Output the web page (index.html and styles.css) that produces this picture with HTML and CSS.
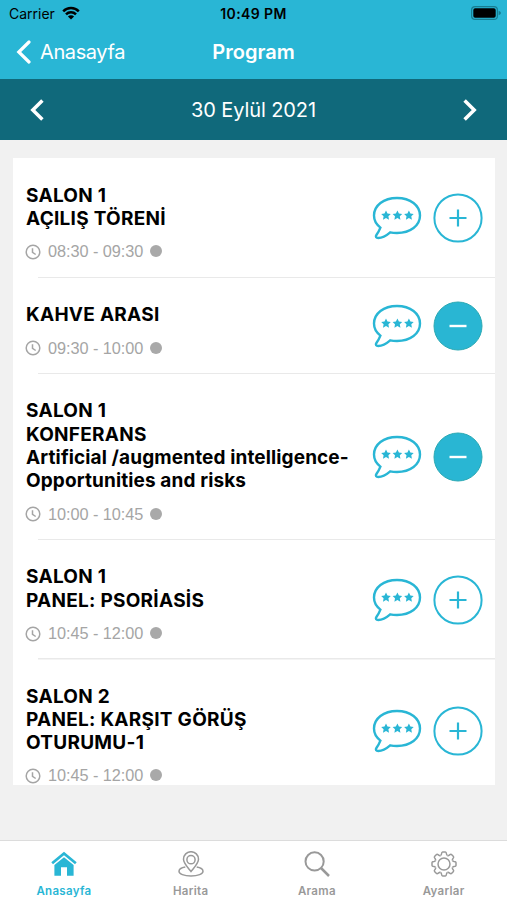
FILE: index.html
```html
<!DOCTYPE html>
<html lang="tr">
<head>
<meta charset="utf-8">
<title>Program</title>
<link rel="stylesheet" href="styles.css">
</head>
<body>
<svg class="defs" aria-hidden="true">
  <symbol id="bubble" viewBox="0 0 50 44">
    <path d="M25 2C38.500 2 48 9.600 48 19.600C48 29.600 38.500 37 25 37C22.500 37 20.300 36.800 18.200 36.300C14.500 39.500 10 42 6.300 42C4 42 3.300 40.600 4.400 39C6.300 36.300 7.500 34 8.400 31.600C4 28.300 2 24.300 2 19.600C2 9.600 11.500 2 25 2Z" fill="none" stroke="currentColor" stroke-width="2.400"/>
    <g fill="currentColor">
      <path id="star" d="M14 14.500L15.500 17.400L18.800 17.900L16.400 20.300L17 23.700L14 22.100L11 23.700L11.600 20.300L9.200 17.900L12.500 17.400Z"/>
      <use href="#star" x="11.400"/>
      <use href="#star" x="22.900"/>
    </g>
  </symbol>
  <symbol id="clock" viewBox="0 0 16 16">
    <circle cx="8" cy="8" r="6.800"/>
    <path d="M7.500 4.300V8.300L10.700 10.500"/>
  </symbol>
  <symbol id="plus" viewBox="0 0 50 50">
    <circle cx="25" cy="25" r="23.600" fill="none" stroke="currentColor" stroke-width="2"/>
    <path d="M16.500 25H33.500M25 16.500V33.500" stroke="currentColor" stroke-width="2.200"/>
  </symbol>
  <symbol id="minus" viewBox="0 0 50 50">
    <circle cx="25" cy="25" r="24" fill="#29b6d3" stroke="#2aa9b4" stroke-width="1"/>
    <path d="M16.500 25H33.500" stroke="#fff" stroke-width="2.400"/>
  </symbol>
</svg>

<header>
  <div class="status">
    <span class="carrier">Carrier</span>
    <svg class="wifi" viewBox="0 0 18 14"><path d="M1.200 5.300A11 11 0 0 1 16.800 5.300M4 8.300A7 7 0 0 1 14 8.300" fill="none" stroke="#000" stroke-width="2.500"/><path d="M9 13.600L5.900 10.500A4.400 4.400 0 0 1 12.100 10.500Z"/></svg>
    <span class="clock-text">10:49 PM</span>
    <svg class="battery" viewBox="0 0 30 14"><rect x=".6" y=".6" width="25.800" height="12.800" rx="3.500" fill="none" stroke="#177d91" stroke-width="1.200"/><rect x="2.300" y="2.300" width="22.400" height="9.400" rx="1.800"/><path d="M27.600 4.800Q30 5.500 30 7Q30 8.500 27.600 9.200Z" fill="#177d91"/></svg>
  </div>
  <nav class="bar">
    <svg class="back-icon" viewBox="0 0 16 24"><path d="M13 2L2.800 12L13 22" fill="none" stroke="#fff" stroke-width="3.200" stroke-linecap="round"/></svg>
    <span class="back">Anasayfa</span>
    <h1>Program</h1>
  </nav>
</header>

<div class="date">
  <svg viewBox="0 0 14 22"><path d="M12.400 1.500L2.800 11L12.400 20.500" fill="none" stroke="#fff" stroke-width="3.500"/></svg>
  <span>30 Eylül 2021</span>
  <svg viewBox="0 0 14 22"><path d="M1.600 1.500L11.200 11L1.600 20.500" fill="none" stroke="#fff" stroke-width="3.500"/></svg>
</div>

<main>
  <ul class="sessions">
    <li>
      <div class="info"><h2>SALON 1<br>AÇILIŞ TÖRENİ</h2>
        <p><svg class="time-icon"><use href="#clock"/></svg><time>08:30 - 09:30</time><i class="dot"></i></p></div>
      <svg class="bubble"><use href="#bubble"/></svg><svg class="toggle"><use href="#plus"/></svg>
    </li>
    <li>
      <div class="info"><h2>KAHVE ARASI</h2>
        <p><svg class="time-icon"><use href="#clock"/></svg><time>09:30 - 10:00</time><i class="dot"></i></p></div>
      <svg class="bubble"><use href="#bubble"/></svg><svg class="toggle"><use href="#minus"/></svg>
    </li>
    <li>
      <div class="info"><h2>SALON 1<br>KONFERANS<br><span class="latin">Artificial /augmented intelligence-<br>Opportunities and risks</span></h2>
        <p><svg class="time-icon"><use href="#clock"/></svg><time>10:00 - 10:45</time><i class="dot"></i></p></div>
      <svg class="bubble"><use href="#bubble"/></svg><svg class="toggle"><use href="#minus"/></svg>
    </li>
    <li>
      <div class="info"><h2>SALON 1<br>PANEL: PSORİASİS</h2>
        <p><svg class="time-icon"><use href="#clock"/></svg><time>10:45 - 12:00</time><i class="dot"></i></p></div>
      <svg class="bubble"><use href="#bubble"/></svg><svg class="toggle"><use href="#plus"/></svg>
    </li>
    <li>
      <div class="info"><h2>SALON 2<br>PANEL: KARŞIT GÖRÜŞ<br>OTURUMU-1</h2>
        <p><svg class="time-icon"><use href="#clock"/></svg><time>10:45 - 12:00</time><i class="dot"></i></p></div>
      <svg class="bubble"><use href="#bubble"/></svg><svg class="toggle"><use href="#plus"/></svg>
    </li>
  </ul>
</main>

<footer>
  <a class="tab active"><svg viewBox="0 0 26 26" fill="currentColor"><path d="M13 .8L.3 11.200L2 13.200L13 4.300L24 13.200L25.700 11.200Z"/><path d="M13 6.300L3.400 14V24.700H10V16.200H16V24.700H22.600V14Z"/></svg><span>Anasayfa</span></a>
  <a class="tab"><svg viewBox="0 0 26 26" fill="none" stroke="currentColor" stroke-width="1.500"><path d="M13 20.500C9 15.500 5.500 12 5.500 8.200A7.500 7.500 0 0 1 20.500 8.200C20.500 12 17 15.500 13 20.500Z"/><circle cx="13" cy="8.700" r="4.100"/><path d="M7.300 16C3.500 16.700 1 18.200 1 20.200C1 23 6 25 13 25S25 23 25 20.200C25 18.200 22.500 16.700 18.700 16"/></svg><span>Harita</span></a>
  <a class="tab"><svg viewBox="0 0 26 26" fill="none" stroke="currentColor"><circle cx="10.600" cy="10.400" r="9.100" stroke-width="2"/><path d="M17 17L25 25" stroke-width="2.500"/></svg><span>Arama</span></a>
  <a class="tab"><svg viewBox="-13 -13 26 26" fill="none" stroke="currentColor" stroke-width="1.500" stroke-linejoin="round"><circle r="6"/><path id="tooth" d="M-3.520 -8.500Q-2.700 -8.800 -2.500 -10Q-2.300 -12 -1.400 -12H1.400Q2.300 -12 2.500 -10Q2.700 -8.800 3.520 -8.500"/><use href="#tooth" transform="rotate(45)"/><use href="#tooth" transform="rotate(90)"/><use href="#tooth" transform="rotate(135)"/><use href="#tooth" transform="rotate(180)"/><use href="#tooth" transform="rotate(225)"/><use href="#tooth" transform="rotate(270)"/><use href="#tooth" transform="rotate(315)"/></svg><span>Ayarlar</span></a>
</footer>
</body>
</html>
```
FILE: styles.css
```css
* { box-sizing: border-box; }
body {
  margin: 0;
  height: 900px;
  display: flex;
  flex-direction: column;
  overflow: hidden;
  background: #f1f1f1;
  color: #000;
  font-family: Inter, "Liberation Sans", sans-serif;
  white-space: nowrap;
}
svg { display: block; flex: none; }
.defs { position: absolute; width: 0; height: 0; }
header { height: 79px; background: #29b6d5; }
.status {
  height: 27px;
  display: grid;
  grid-template-columns: auto 24px 1fr auto;
  align-items: center;
  padding: 0 6px 0 9px;
  position: relative;
}
.carrier { font-size: 14px; }
.wifi { width: 18px; height: 14px; margin-left: 7px; margin-top: -1px; }
.clock-text {
  position: absolute;
  left: 0;
  right: 0;
  text-align: center;
  font-size: 14px;
  font-weight: 600;
  letter-spacing: .4px;
}
.battery { grid-column: 4; width: 30px; height: 14px; margin-top: -1px; }
.bar {
  height: 52px;
  display: grid;
  grid-template-columns: 16px 1fr auto 1fr 16px;
  align-items: center;
  padding: 0 16px;
  color: #fff;
}
.back-icon { width: 16px; height: 24px; margin-top: -2px; }
.back { font-size: 20px; padding-left: 8px; letter-spacing: -.4px; margin-top: -2px; }
h1 { margin: -2px 0 0; font-size: 20px; font-weight: 600; letter-spacing: .03px; }
.date {
  height: 61px;
  background: #10697b;
  color: #fff;
  display: flex;
  align-items: center;
  justify-content: space-between;
  padding: 0 30px;
  font-size: 20px;
  letter-spacing: -.1px;
}
.date svg { width: 14px; height: 22px; }
main { flex: 1; padding: 18px 12px 54px 13px; min-height: 0; }
.sessions {
  list-style: none;
  margin: 0;
  padding: 0;
  height: 627px;
  overflow: hidden;
  background: #fff;
}
.sessions li {
  display: flex;
  align-items: center;
  padding: 0 12px 0 13px;
  height: 119.500px;
  background: linear-gradient(#e9e9e9, #e9e9e9) 25px 100% / 100% 1.500px no-repeat;
}
.sessions li:nth-child(1) { height: 120px; }
.sessions li:nth-child(2) { height: 96px; }
.sessions li:nth-child(3) { height: 166px; }
.sessions li:nth-child(5) { height: 142px; }
.info { flex: 1; padding-top: 8px; }
h2 { margin: 0; font-size: 19px; line-height: 23.300px; font-weight: 650; letter-spacing: .27px; }
.latin { letter-spacing: .12px; }
.info p { display: flex; align-items: center; margin: 12px 0 0; height: 18px; color: #a5a5a5; }
.time-icon { width: 16px; height: 16px; fill: none; stroke: #a5a5a5; stroke-width: 1.500; margin: 1px 0 0 -1px; }
time { font: 16.300px/18px "Liberation Sans", sans-serif; margin-left: 7px; letter-spacing: -.06px; }
.dot { width: 12px; height: 12px; border-radius: 50%; background: #a9a9a9; margin-left: 7px; }
.bubble { width: 50px; height: 44px; color: #29b6d5; margin-right: 11px; }
.toggle { width: 50px; height: 50px; color: #29b6d5; }
footer {
  height: 60px;
  display: grid;
  grid-template-columns: repeat(4, 1fr);
  background: #fff;
  border-top: 1px solid #dcdcdc;
  color: #999;
}
.tab { display: flex; flex-direction: column; align-items: center; padding-top: 10px; }
.tab svg { width: 26px; height: 26px; }
.tab span { font-size: 11.500px; line-height: 16px; margin-top: 6px; font-weight: 600; letter-spacing: .3px; }
.active { color: #29b6d5; }
.tab:nth-child(1), .tab:nth-child(2) { padding-left: 1px; }
```
